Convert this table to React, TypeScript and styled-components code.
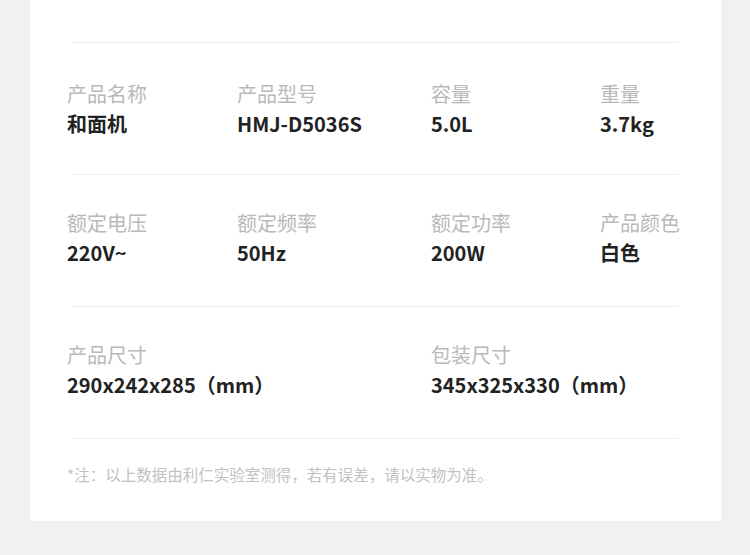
import React from "react";
import styled, { createGlobalStyle } from "styled-components";

const GlobalStyle = createGlobalStyle`
  html, body {
    margin: 0;
    padding: 0;
    background: #f1f1f1;
  }
  body {
    font-family: "Noto Sans CJK SC", "Noto Sans", sans-serif;
  }
`;

const Page = styled.div`
  width: 750px;
  height: 555px;
  background: #f1f1f1;
  padding: 0 29px 0 30px;
  box-sizing: border-box;
`;

const Card = styled.div`
  background: #fff;
  padding: 42px 0 36px;
`;

const Divider = styled.div`
  height: 1px;
  background: #ececec;
  margin: 0 43px 0 42px;
`;

const Section = styled.div<{ $first?: boolean }>`
  display: grid;
  grid-template-columns: 170px 194px 169px 1fr;
  padding: ${(p) => (p.$first ? "36px 0 35px 37px" : "33px 0 38px 37px")};
`;

const Item = styled.div<{ $wide?: boolean }>`
  grid-column: ${(p) => (p.$wide ? "span 2" : "span 1")};
  display: flex;
  flex-direction: column;
  white-space: nowrap;
`;

const Label = styled.div`
  font-size: 20px;
  line-height: 30px;
  color: #b9b9b9;
`;

const Value = styled.div`
  font-size: 20px;
  line-height: 30px;
  font-weight: 700;
  color: #222;
`;

const Note = styled.div`
  padding: 24px 0 0 37px;
  font-size: 15.5px;
  line-height: 22px;
  color: #c2c2c2;
`;

type Spec = { label: string; value: string; wide?: boolean };

const sections: Spec[][] = [
  [
    { label: "产品名称", value: "和面机" },
    { label: "产品型号", value: "HMJ-D5036S" },
    { label: "容量", value: "5.0L" },
    { label: "重量", value: "3.7kg" },
  ],
  [
    { label: "额定电压", value: "220V~" },
    { label: "额定频率", value: "50Hz" },
    { label: "额定功率", value: "200W" },
    { label: "产品颜色", value: "白色" },
  ],
  [
    { label: "产品尺寸", value: "290x242x285（mm）", wide: true },
    { label: "包装尺寸", value: "345x325x330（mm）", wide: true },
  ],
];

const App: React.FC = () => (
  <>
    <GlobalStyle />
    <Page>
      <Card>
        {sections.map((items, i) => (
          <React.Fragment key={i}>
            <Divider />
            <Section $first={i === 0}>
              {items.map((it) => (
                <Item key={it.label} $wide={it.wide}>
                  <Label>{it.label}</Label>
                  <Value>{it.value}</Value>
                </Item>
              ))}
            </Section>
          </React.Fragment>
        ))}
        <Divider />
        <Note>*注：以上数据由利仁实验室测得，若有误差，请以实物为准。</Note>
      </Card>
    </Page>
  </>
);

export default App;
